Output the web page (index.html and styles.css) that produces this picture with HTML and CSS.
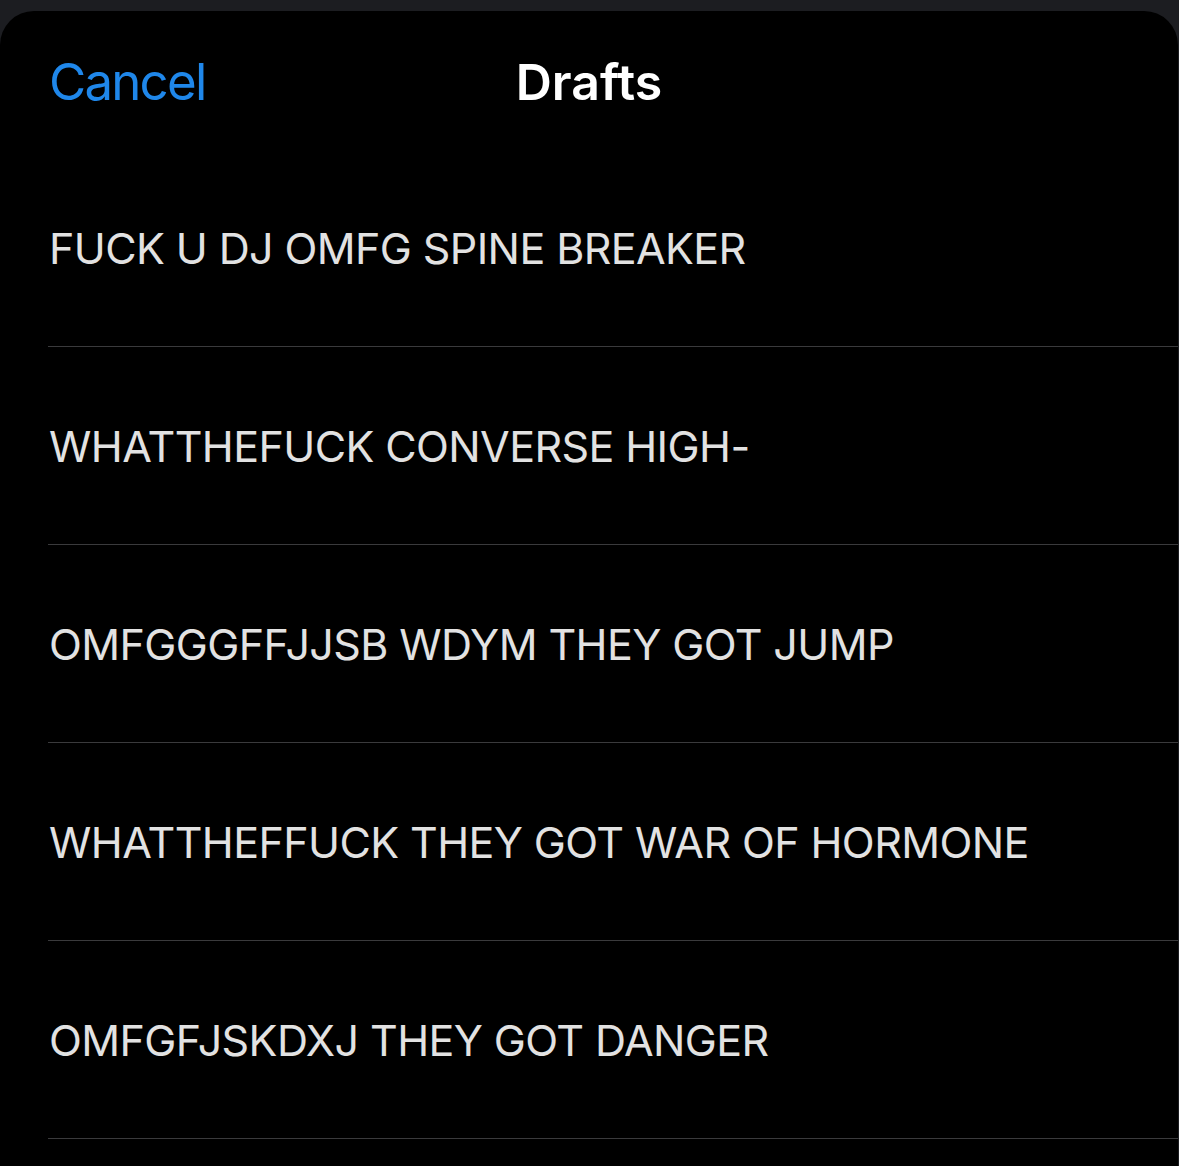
FILE: index.html
```html
<!DOCTYPE html>
<html lang="en">
<head>
    <meta charset="UTF-8">
    <meta name="viewport" content="width=device-width, initial-scale=1.0">
    <title>Drafts</title>
    <link rel="stylesheet" href="styles.css">
</head>
<body>

    <div class="sheet">
        <div class="header">
            <span class="cancel">Cancel</span>
            <span class="title">Drafts</span>
        </div>

        <ul class="drafts">
            <li class="draft">FUCK U DJ OMFG SPINE BREAKER</li>
            <li class="draft">WHATTHEFUCK CONVERSE HIGH-</li>
            <li class="draft">OMFGGGFFJJSB WDYM THEY GOT JUMP</li>
            <li class="draft">WHATTHEFFUCK THEY GOT WAR OF HORMONE</li>
            <li class="draft">OMFGFJSKDXJ THEY GOT DANGER</li>
        </ul>
    </div>

</body>
</html>
```

FILE: styles.css
```css
html, body { margin: 0; padding: 0; background: #1c1d21; }
body { font-family: Inter, "Liberation Sans", sans-serif; height: 1166px; overflow: hidden; }

.sheet { margin: 11px 1px 0 0; background: #000; border-radius: 34px 34px 0 0; height: 1155px; }

.header { position: relative; height: 138px; display: flex; justify-content: center; }
.cancel { position: absolute; left: 49px; top: 41px; color: #1f87ea; font-size: 51px; line-height: 60px; letter-spacing: -1.8px; }
.title { margin-top: 41px; color: #fff; font-size: 50px; font-weight: 600; line-height: 60px; height: 60px; }

.drafts { list-style: none; margin: 0; padding: 0; }
.draft { margin-left: 48px; padding-left: 1px; height: 197px; border-bottom: 1px solid #3a3a3c;
         display: flex; align-items: center; color: #e2e2e2; font-size: 43px; letter-spacing: -0.6px; }
```
